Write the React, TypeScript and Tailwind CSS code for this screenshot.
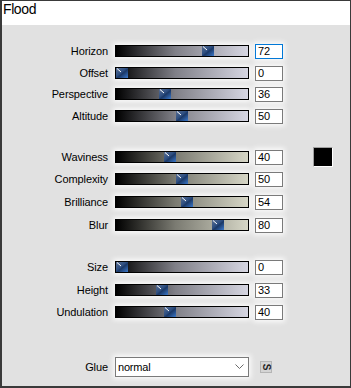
import React from 'react'

type Row = { label: string; value: number; gap: number; tone: 'cool' | 'warm'; focused?: boolean; swatch?: boolean }

const rows: Row[] = [
  { label: 'Horizon', value: 72, gap: 20, tone: 'cool', focused: true },
  { label: 'Offset', value: 0, gap: 10, tone: 'cool' },
  { label: 'Perspective', value: 36, gap: 9, tone: 'cool' },
  { label: 'Altitude', value: 50, gap: 10, tone: 'cool' },
  { label: 'Waviness', value: 40, gap: 29, tone: 'warm', swatch: true },
  { label: 'Complexity', value: 50, gap: 10, tone: 'warm' },
  { label: 'Brilliance', value: 54, gap: 11, tone: 'warm' },
  { label: 'Blur', value: 80, gap: 11, tone: 'warm' },
  { label: 'Size', value: 0, gap: 30, tone: 'cool' },
  { label: 'Height', value: 33, gap: 11, tone: 'cool' },
  { label: 'Undulation', value: 40, gap: 10, tone: 'cool' },
]

function Thumb() {
  return (
    <svg width="12" height="10" viewBox="0 0 12 10" className="block">
      <defs>
        <linearGradient id="thumbFill" x1="0" y1="0" x2="1" y2="1">
          <stop offset="0" stopColor="#5a6f92" />
          <stop offset="0.45" stopColor="#2c4d80" />
          <stop offset="0.55" stopColor="#1b3866" />
          <stop offset="1" stopColor="#3b79cc" />
        </linearGradient>
      </defs>
      <rect width="12" height="10" fill="url(#thumbFill)" />
      <line x1="1" y1="0.5" x2="5" y2="4" stroke="#ffffff" strokeWidth="1" />
    </svg>
  )
}

function Slider({ row }: { row: Row }) {
  const bg = row.tone === 'warm'
    ? 'bg-[linear-gradient(to_right,#000000,#7b7b72_45%,#d6d6c6)]'
    : 'bg-[linear-gradient(to_right,#000000,#808088_45%,#d6d6e2)]'
  return (
    <div className={`relative ml-[7px] h-[12px] w-[134px] border border-black ${bg} shadow-[0_0_5px_2px_rgba(255,255,255,0.85)]`}>
      <div className="absolute top-0" style={{ left: (row.value / 100) * 120 }}>
        <Thumb />
      </div>
    </div>
  )
}

export default function App() {
  return (
    <div className="flex h-[388px] w-[351px] flex-col border-t border-r border-b-2 border-l-2 border-[#3a3a3a] bg-[#e1e1e1] font-['Liberation_Sans',Arial,sans-serif] text-black">
      <div className="h-[24px] bg-white pl-[1px] text-[14px] leading-[17px] tracking-[-0.4px]">Flood</div>
      <div className="flex flex-col">
        {rows.map((row) => (
          <div key={row.label} className="flex h-[12px] items-center" style={{ marginTop: row.gap }}>
            <div className="w-[106px] text-right text-[11px] leading-[12px] tracking-[-0.1px]">{row.label}</div>
            <Slider row={row} />
            <div
              className={`ml-[6px] h-[15px] w-[28px] shrink-0 border bg-white pl-[2px] text-[11px] leading-[13px] shadow-[0_0_5px_2px_rgba(255,255,255,0.85)] ${row.focused ? 'border-[#0078d7]' : 'border-[#7a7a7a]'}`}
            >
              {row.value}
            </div>
            {row.swatch && (
              <div className="ml-[30px] h-[20px] w-[20px] shrink-0 border border-t-[#a0a0a0] border-l-[#a0a0a0] border-r-white border-b-white bg-black" />
            )}
          </div>
        ))}
        <div className="mt-[39px] flex h-[20px] items-center">
          <div className="w-[106px] text-right text-[11px] leading-[12px] tracking-[-0.1px]">Glue</div>
          <div className="ml-[7px] flex h-[20px] w-[134px] items-center justify-between border border-[#7a7a7a] bg-white pl-[2px] pr-[4px] text-[11px] tracking-[-0.2px] shadow-[0_0_5px_2px_rgba(255,255,255,0.85)]">
            <span>normal</span>
            <svg width="9" height="6" viewBox="0 0 9 6" className="block">
              <polyline points="0.5,0.5 4.5,4.5 8.5,0.5" fill="none" stroke="#6b6b6b" strokeWidth="1" />
            </svg>
          </div>
          <div className="ml-[11px] flex h-[12px] w-[12px] items-center justify-center border border-[#b5b5b5] bg-[#d4d4d4] text-[10px] font-bold leading-none text-[#222]">
            <span className="rotate-90">S</span>
          </div>
        </div>
      </div>
    </div>
  )
}
